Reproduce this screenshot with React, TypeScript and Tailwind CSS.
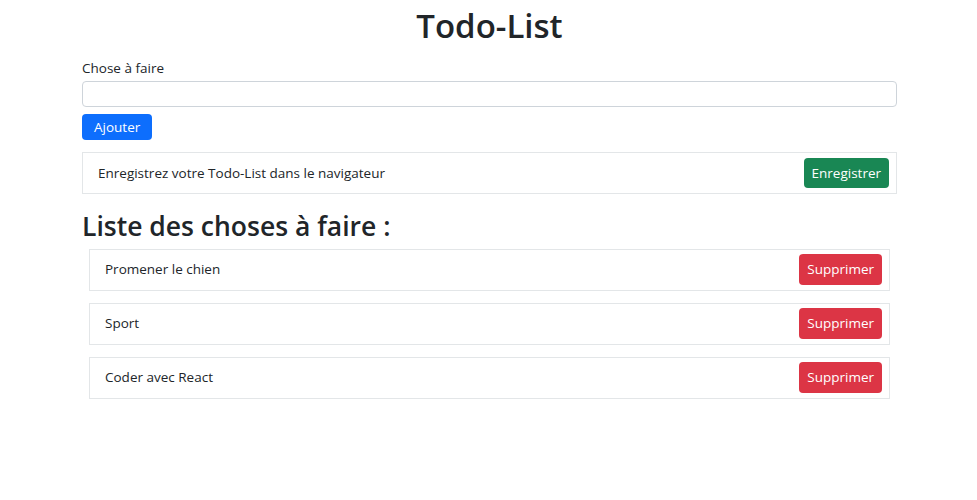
import React, { useState } from "react";

const initialTodos = ["Promener le chien", "Sport", "Coder avec React"];

export default function App() {
  const [todos, setTodos] = useState<string[]>(initialTodos);
  const [value, setValue] = useState("");

  const addTodo = () => {
    if (!value.trim()) return;
    setTodos([...todos, value.trim()]);
    setValue("");
  };

  return (
    <div className="min-h-screen bg-white text-[#212529] font-['Open_Sans',sans-serif]">
      <div className="w-[815px] ml-[82px]">
        <h1 className="text-center text-[33px] font-semibold leading-none pt-[9px] h-[52px]">
          Todo-List
        </h1>

        <label className="block text-[13.5px] mt-[7px] mb-[4px] leading-[18px]">Chose à faire</label>
        <input
          value={value}
          onChange={(e) => setValue(e.target.value)}
          className="block w-full h-[26px] border border-[#ced4da] rounded-[4px] px-2 text-[13px] outline-none"
        />
        <button
          onClick={addTodo}
          className="mt-[7px] h-[26px] px-[12px] rounded-[4px] bg-[#0d6efd] text-white text-[13.5px]"
        >
          Ajouter
        </button>

        <div className="mt-[12px] h-[42px] border border-[#e3e6e8] flex items-center justify-between pl-[15px] pr-[7px]">
          <span className="text-[13.5px]">Enregistrez votre Todo-List dans le navigateur</span>
          <button className="h-[30px] px-[8px] rounded-[4px] bg-[#198754] text-white text-[13.5px]">
            Enregistrer
          </button>
        </div>

        <h2 className="text-[26.5px] font-semibold leading-none mt-[19px] mb-[9px]">
          Liste des choses à faire :
        </h2>

        <ul className="flex flex-col gap-[12px] px-[7px]">
          {todos.map((todo, i) => (
            <li
              key={i}
              className="h-[42px] border border-[#e3e6e8] flex items-center justify-between pl-[15px] pr-[7px]"
            >
              <span className="text-[13.5px]">{todo}</span>
              <button
                onClick={() => setTodos(todos.filter((_, j) => j !== i))}
                className="h-[31px] px-[8px] rounded-[4px] bg-[#dc3545] text-white text-[13.5px]"
              >
                Supprimer
              </button>
            </li>
          ))}
        </ul>
      </div>
    </div>
  );
}
